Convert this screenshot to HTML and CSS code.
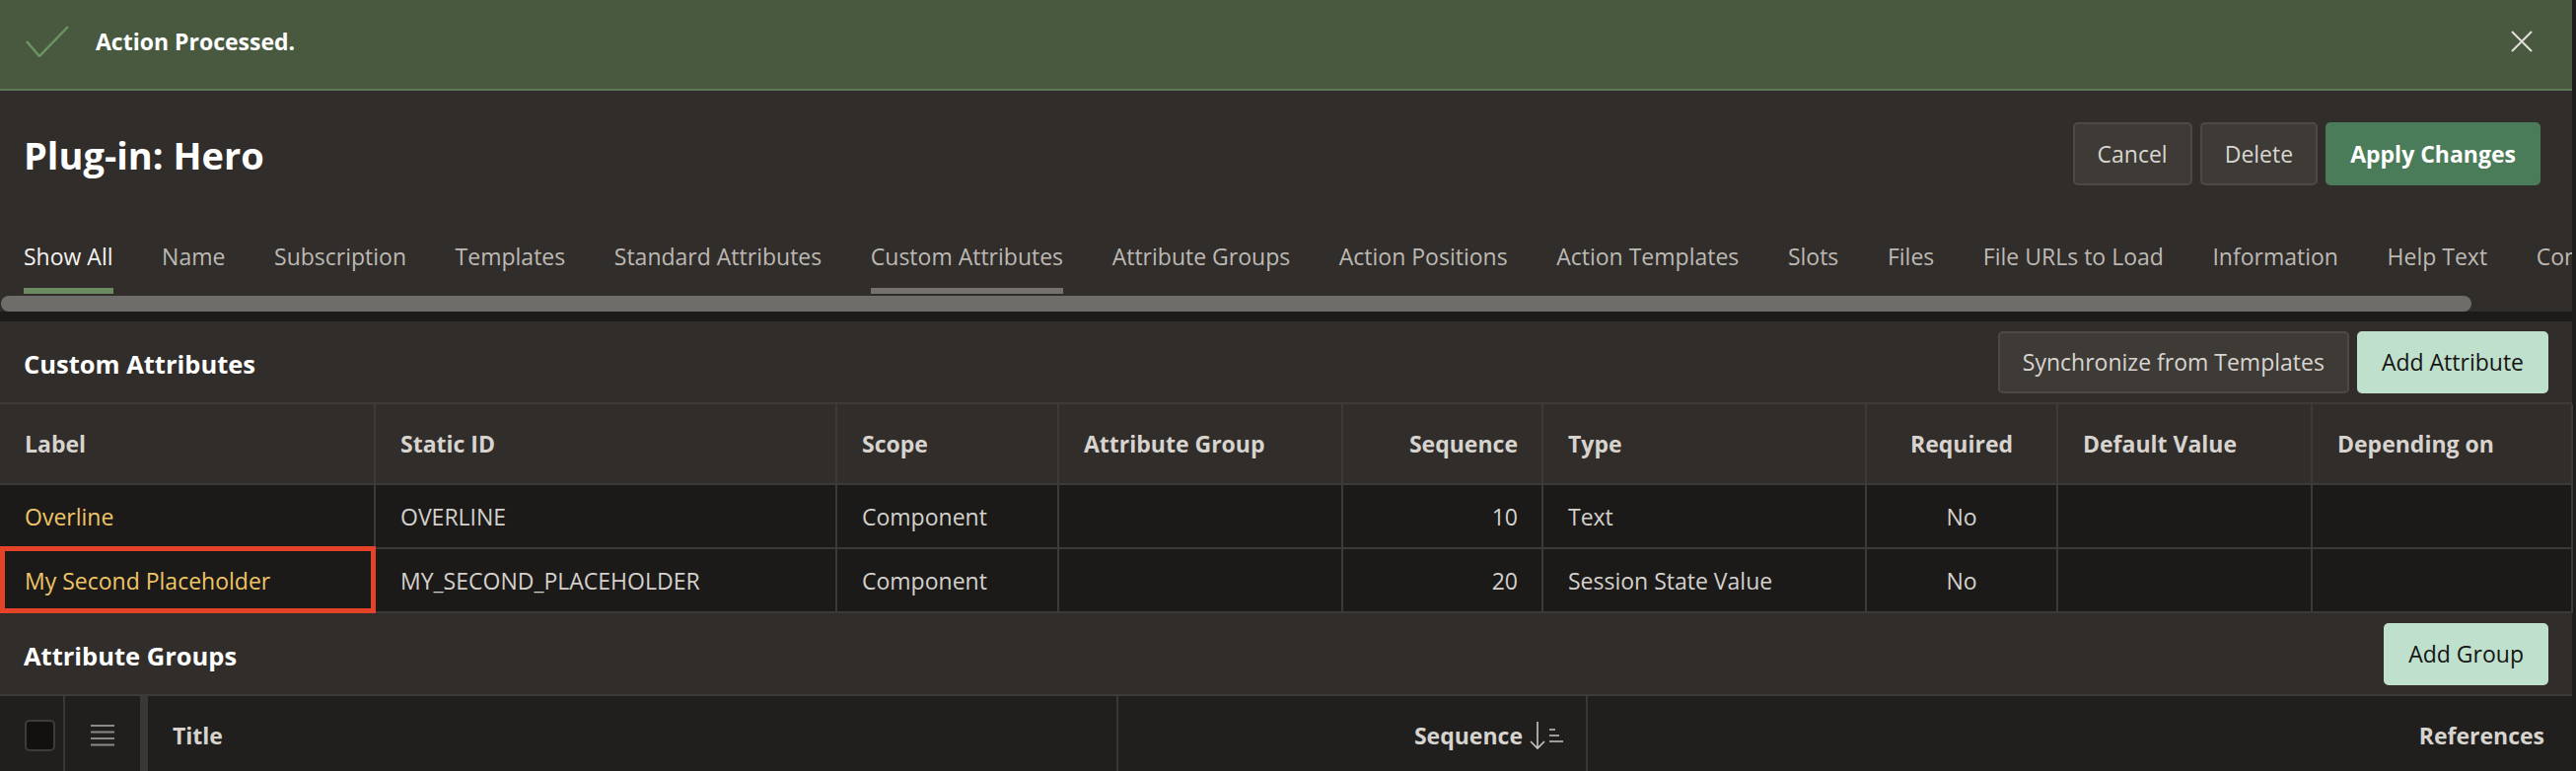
FILE: index.html
```html
<!DOCTYPE html>
<html lang="en">
<head>
<meta charset="utf-8">
<title>Plug-in: Hero</title>
<link rel="stylesheet" href="styles.css">
</head>
<body>
<div class="page">
  <div class="alert">
    <svg class="alert-icon" width="44" height="32" viewBox="0 0 44 32"><polyline points="1,16 14,31 43,1" fill="none" stroke="#6a9460" stroke-width="2.5"/></svg>
    <span class="alert-text">Action Processed.</span>
    <svg class="alert-close" width="22" height="22" viewBox="0 0 22 22"><path d="M1 1L21 21M21 1L1 21" stroke="#e2dfda" stroke-width="2" fill="none"/></svg>
  </div>

  <div class="page-header">
    <h1 class="title">Plug-in: Hero</h1>
    <div class="actions">
      <button class="btn">Cancel</button>
      <button class="btn">Delete</button>
      <button class="btn btn-hot">Apply Changes</button>
    </div>
  </div>

  <nav class="tabs">
    <span class="tab active">Show All</span>
    <span class="tab">Name</span>
    <span class="tab">Subscription</span>
    <span class="tab">Templates</span>
    <span class="tab">Standard Attributes</span>
    <span class="tab current">Custom Attributes</span>
    <span class="tab">Attribute Groups</span>
    <span class="tab">Action Positions</span>
    <span class="tab">Action Templates</span>
    <span class="tab">Slots</span>
    <span class="tab">Files</span>
    <span class="tab">File URLs to Load</span>
    <span class="tab">Information</span>
    <span class="tab">Help Text</span>
    <span class="tab">Comments</span>
  </nav>
  <div class="scrollbar"><div class="thumb"></div></div>
  <div class="band"></div>

  <section class="region">
    <div class="region-header">
      <h2 class="region-title">Custom Attributes</h2>
      <div class="actions">
        <button class="btn btn-sm">Synchronize from Templates</button>
        <button class="btn btn-sm btn-mint">Add Attribute</button>
      </div>
    </div>
    <table class="report">
      <colgroup>
        <col class="c1"><col class="c2"><col class="c3"><col class="c4"><col class="c5"><col class="c6"><col class="c7"><col class="c8"><col class="c9">
      </colgroup>
      <thead>
        <tr>
          <th>Label</th><th>Static ID</th><th>Scope</th><th>Attribute Group</th><th class="num">Sequence</th><th>Type</th><th class="mid">Required</th><th>Default Value</th><th>Depending on</th>
        </tr>
      </thead>
      <tbody>
        <tr>
          <td class="link">Overline</td><td>OVERLINE</td><td>Component</td><td></td><td class="num">10</td><td>Text</td><td class="mid">No</td><td></td><td></td>
        </tr>
        <tr>
          <td class="link hlcell">My Second Placeholder<span class="hl"></span></td><td>MY_SECOND_PLACEHOLDER</td><td>Component</td><td></td><td class="num">20</td><td>Session State Value</td><td class="mid">No</td><td></td><td></td>
        </tr>
      </tbody>
    </table>
  </section>

  <section class="region">
    <div class="region-header">
      <h2 class="region-title">Attribute Groups</h2>
      <div class="actions">
        <button class="btn btn-sm btn-mint">Add Group</button>
      </div>
    </div>
    <div class="grid-head">
      <div class="gh gh-check"><span class="checkbox"></span></div>
      <div class="gh gh-menu">
        <svg width="24" height="22" viewBox="0 0 24 22"><path d="M0 1H24M0 7.5H24M0 14H24M0 20.5H24" stroke="#8b8885" stroke-width="2"/></svg>
      </div>
      <div class="gh gh-divider"></div>
      <div class="gh gh-title">Title</div>
      <div class="gh gh-seq">Sequence
        <svg class="sort" width="36" height="30" viewBox="0 0 36 30"><path d="M9 1V28M2 21L9 28L16 21" stroke="#c9c6c1" stroke-width="1.6" fill="none"/><path d="M21 9H27M21 15H31M21 21H35" stroke="#c9c6c1" stroke-width="1.6"/></svg>
      </div>
      <div class="gh gh-refs">References</div>
    </div>
  </section>
</div>
</body>
</html>
```
FILE: styles.css
```css
* { box-sizing: border-box; }
html, body { margin: 0; padding: 0; }
body {
  background: #1f1d1c;
  font-family: "Open Sans", "Noto Sans", sans-serif;
  font-size: 23px;
  color: #d6d3ce;
  width: 2612px;
  height: 782px;
  overflow: hidden;
}
.page {
  width: 2608px;
  background: #312d2a;
  min-height: 782px;
}

/* alert */
.alert {
  height: 92px;
  background: #495940;
  border-bottom: 2px solid #5d7654;
  display: flex;
  align-items: center;
  padding: 0 40px 6px 26px;
}
.alert-icon { flex: none; }
.alert-text {
  margin-left: 27px;
  font-weight: 700;
  font-size: 23px;
  color: #ffffff;
}
.alert-close { margin-left: auto; flex: none; }

/* page header */
.page-header {
  height: 128px;
  display: flex;
  align-items: center;
  padding: 0 32px 0 24px;
}
.title {
  margin: 0;
  font-size: 38px;
  font-weight: 700;
  color: #ffffff;
  line-height: 1;
  padding-top: 2px;
}
.actions {
  margin-left: auto;
  display: flex;
  gap: 8px;
}
.btn {
  font-family: inherit;
  font-size: 23px;
  height: 64px;
  padding: 0 23px;
  border: 2px solid #4d4a46;
  border-radius: 5px;
  background: #3e3b37;
  color: #d8d5d0;
  line-height: 1;
}
.btn-hot {
  background: #4b7c59;
  border-color: #4b7c59;
  color: #ffffff;
  font-weight: 700;
}
.btn-sm { height: 63px; }
.btn-mint {
  background: #bfe0cc;
  border-color: #bfe0cc;
  color: #161513;
}

/* tabs */
.tabs {
  display: flex;
  gap: 49.6px;
  padding-left: 24px;
  height: 78px;
  overflow: hidden;
  white-space: nowrap;
}
.tab {
  flex: none;
  height: 78px;
  padding-top: 8px;
  display: flex;
  align-items: center;
  border-bottom: 6px solid transparent;
  color: #bcb9b4;
}
.tab.active { color: #f4f2ef; border-bottom-color: #6b8c60; }
.tab.current { border-bottom-color: #75726e; }
.scrollbar {
  height: 18px;
  padding-top: 2px;
}
.thumb {
  width: 2505px;
  height: 16px;
  margin-left: 1px;
  border-radius: 8px;
  background: #6f6d69;
}
.band {
  height: 10px;
  background: #1c1b1a;
}

/* regions */
.region-header {
  height: 84px;
  display: flex;
  align-items: center;
  padding: 0 24px;
  border-bottom: 2px solid #3e3a37;
}
.region-title {
  margin: 0;
  font-size: 25.5px;
  font-weight: 700;
  color: #ffffff;
  padding-top: 4px;
}

/* report table */
.report {
  width: 2608px;
  table-layout: fixed;
  border-collapse: collapse;
}
.c1 { width: 380px; } .c2 { width: 468px; } .c3 { width: 225px; }
.c4 { width: 288px; } .c5 { width: 203px; } .c6 { width: 328px; }
.c7 { width: 194px; } .c8 { width: 258px; } .c9 { width: 264px; }
.report th, .report td {
  border: 2px solid #3d3936;
  padding: 0 24px 0 25px;
  text-align: left;
  white-space: nowrap;
}
.report tr > :first-child { border-left: 0; }
.report thead tr { height: 81px; }
.report th {
  font-weight: 700;
  color: #d7d4cf;
  background: #312d2a;
  border-top: 0;
}
.report tbody tr { height: 65px; }
.report td {
  background: #1c1a19;
  color: #d4d1cc;
}
.report td.link { color: #eec566; }
.report .num { text-align: right; }
.report .mid { text-align: center; padding: 0; }
.hlcell { position: relative; }
.hl {
  position: absolute;
  top: -3px;
  left: 0;
  right: -2px;
  bottom: -2px;
  border: 5px solid #e5422a;
  pointer-events: none;
}

/* grid header */
.grid-head {
  display: grid;
  grid-template-columns: 66px 76px 8px 984px 476px 1fr;
  height: 80px;
  background: #201f1d;
  font-weight: 700;
  color: #d7d4cf;
}
.gh {
  display: flex;
  align-items: center;
  border-right: 2px solid #393633;
}
.gh-check { justify-content: flex-start; padding-left: 25px; }
.checkbox {
  width: 31px;
  height: 32px;
  border: 2px solid #3e3c39;
  border-radius: 5px;
  background: #121110;
}
.gh-menu { padding-left: 26px; border-right: 0; }
.gh-divider { background: #3a3835; border-right: 0; }
.gh-title { padding-left: 25px; }
.gh-seq { justify-content: flex-end; padding-right: 22px; gap: 6px; }
.gh-refs { justify-content: flex-end; padding-right: 28px; border-right: 0; }
```
